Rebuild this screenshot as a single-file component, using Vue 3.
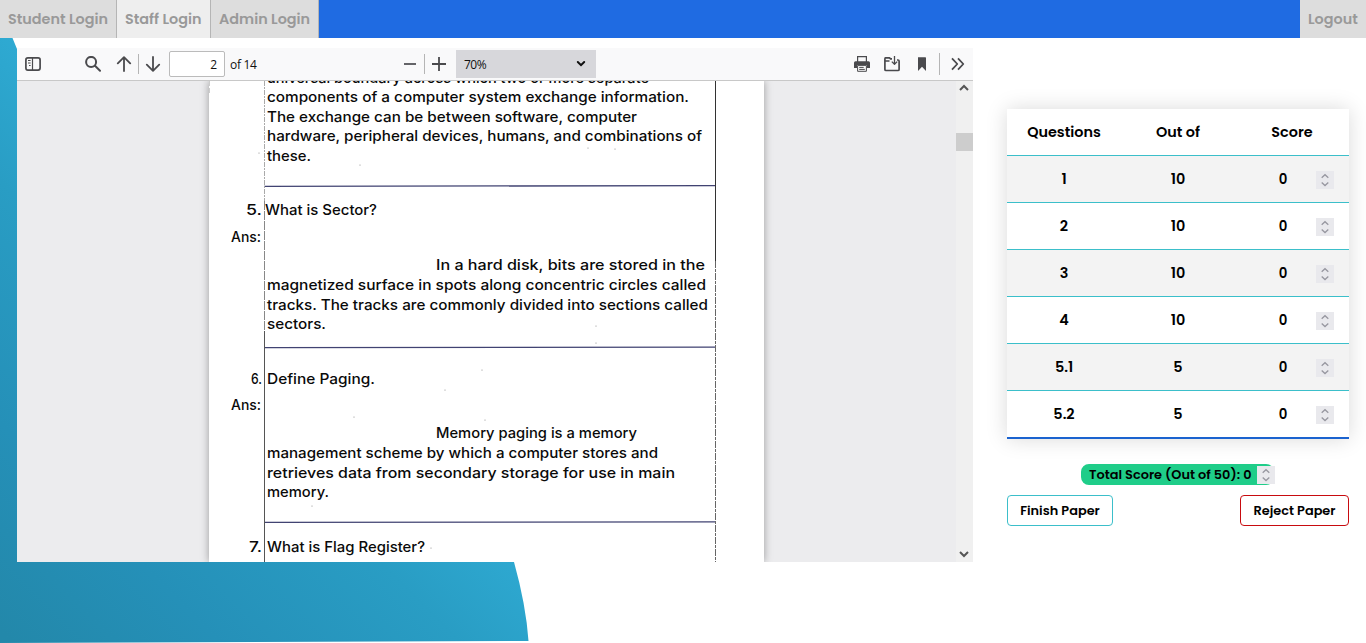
<script setup>
import { ref } from 'vue'

const tabs = ref([
  { label: 'Student Login', cls: 'student' },
  { label: 'Staff Login', cls: 'staff' },
  { label: 'Admin Login', cls: 'admin' },
])

const rows = ref([
  { q: '1', max: 10, score: 0 },
  { q: '2', max: 10, score: 0 },
  { q: '3', max: 10, score: 0 },
  { q: '4', max: 10, score: 0 },
  { q: '5.1', max: 5, score: 0 },
  { q: '5.2', max: 5, score: 0 },
])

// Handwritten lines of the answer sheet: text, start x, baseline, width
const lines = [
  ['universal boundary across which two or more separate', 58, 2, 382],
  ['components of a computer system exchange information.', 58, 21, 422],
  ['The exchange can be between software, computer', 58, 41, 370],
  ['hardware, peripheral devices, humans, and combinations of', 58, 60, 435],
  ['these.', 58, 80, 44],
  ['5.', 37, 134, 16],
  ['What is Sector?', 56, 134, 112],
  ['Ans:', 22, 161, 30],
  ['In a hard disk, bits are stored in the', 227, 189, 269],
  ['magnetized surface in spots along concentric circles called', 58, 209, 439],
  ['tracks. The tracks are commonly divided into sections called', 58, 229, 441],
  ['sectors.', 58, 248, 59],
  ['6.', 42, 303, 11],
  ['Define Paging.', 58, 303, 108],
  ['Ans:', 22, 329, 30],
  ['Memory paging is a memory', 227, 357, 201],
  ['management scheme by which a computer stores and', 58, 377, 391],
  ['retrieves data from secondary storage for use in main', 58, 397, 408],
  ['memory.', 58, 416, 62],
  ['7.', 40, 471, 13],
  ['What is Flag Register?', 58, 471, 158],
]

const specks = [
  [50, 72], [151, 84], [379, 67], [406, 68], [387, 245], [387, 262],
  [273, 289], [236, 309], [145, 336], [276, 339], [103, 425], [222, 467],
]
</script>

<template>
  <div class="app">
    <svg class="blob" width="530" height="605" viewBox="0 38 530 605">
      <defs>
        <linearGradient id="sea" gradientUnits="userSpaceOnUse" x1="30" y1="660" x2="375" y2="315">
          <stop offset="0" stop-color="#2388aa" />
          <stop offset=".3" stop-color="#2590b8" />
          <stop offset=".65" stop-color="#299dc4" />
          <stop offset="1" stop-color="#31b1da" />
        </linearGradient>
      </defs>
      <path d="M0 38H12.5L17 49L30 90L514 562Q526 605 528.5 641L0 643Z" fill="url(#sea)" />
    </svg>

    <header class="nav">
      <a v-for="t in tabs" :key="t.label" class="tab" :class="t.cls"><span>{{ t.label }}</span></a>
      <a class="tab logout"><span>Logout</span></a>
    </header>

    <main class="main">
      <section class="viewer">
        <div class="toolbar">
          <svg class="ic side" width="16" height="16" viewBox="0 0 16 16" fill="none" stroke="#4a4a4d">
            <rect x=".9" y="1.9" width="14.2" height="12.2" rx="2" stroke-width="1.7" />
            <path d="M7.5 2v12" stroke-width="1.2" />
            <path d="M3 4.5h2.6M3 7h2.6M4 9.5h1.6" stroke-width="1" />
          </svg>
          <svg class="ic search" width="16" height="16" viewBox="0 0 16 16" fill="none" stroke="#4a4a4d" stroke-width="2" stroke-linecap="round">
            <circle cx="6.1" cy="5.9" r="5" /><path d="M10 9.8L15 14.8" />
          </svg>
          <svg class="ic up" width="16" height="16" viewBox="0 0 16 16" fill="none" stroke="#4a4a4d" stroke-width="1.8" stroke-linecap="round" stroke-linejoin="round">
            <path d="M8 15V1.4M1.8 7.4L8 1.2l6.2 6.2" />
          </svg>
          <i class="sep s1"></i>
          <svg class="ic down" width="16" height="16" viewBox="0 0 16 16" fill="none" stroke="#4a4a4d" stroke-width="1.8" stroke-linecap="round" stroke-linejoin="round">
            <path d="M8 1v13.6M1.8 8.6L8 14.8l6.2-6.2" />
          </svg>
          <div class="page-no">2</div>
          <span class="of">of 14</span>
          <svg class="ic minus" width="14" height="16" viewBox="0 0 14 16"><path d="M1 8h12" stroke="#4a4a4d" stroke-width="1.7" /></svg>
          <i class="sep s2"></i>
          <svg class="ic plus" width="16" height="16" viewBox="0 0 16 16"><path d="M1 8h14M8 1v14" stroke="#4a4a4d" stroke-width="1.8" /></svg>
          <div class="scale">
            <span>70%</span>
            <svg width="10" height="8" viewBox="0 0 10 8" fill="none" stroke="#111" stroke-width="2" stroke-linecap="round"><path d="M1.8 2L5 5.2L8.2 2" /></svg>
          </div>
          <svg class="ic print" width="16" height="16" viewBox="0 0 16 16">
            <path d="M3.6 6V.7h8.8V6" fill="none" stroke="#4a4a4d" stroke-width="1.2" />
            <path d="M1.5 5.2h13Q16 5.2 16 6.7V12h-3V9H3v3H0V6.7Q0 5.2 1.5 5.2Z" fill="#4a4a4d" />
            <path d="M3.6 9.4h8.8v5.9H3.6ZM5.2 11.4h4.5M5.2 13.4h5.6" fill="none" stroke="#4a4a4d" />
          </svg>
          <svg class="ic save" width="16" height="16" viewBox="0 0 16 16" fill="none" stroke="#4a4a4d" stroke-width="1.7" stroke-linejoin="round">
            <path d="M8 2.9H6.5L5.5 1.9H1.5Q.9 2 .9 3V13.5Q.9 14.5 2 14.5H14Q15.1 14.5 15.1 13.5V5Q15.1 4 14 4H13M1 5H5.5" />
            <path d="M10.5 0V8M7.8 5.6L10.5 8.3L13.2 5.6" stroke-width="1.3" />
          </svg>
          <svg class="ic mark" width="10" height="16" viewBox="0 0 10 16"><path d="M1 1.2H8.4Q9 1.2 9 2V15L5 10.8L1 15Z" fill="#4a4a4d" /></svg>
          <i class="sep s3"></i>
          <svg class="ic more" width="16" height="16" viewBox="0 0 16 16" fill="none" stroke="#4a4a4d" stroke-width="1.8" stroke-linejoin="round"><path d="M2 2.4L7.3 8L2 13.6M8 2.4L13.3 8L8 13.6" /></svg>
        </div>
        <div class="canvas">
          <div class="sheet">
            <svg width="555" height="481" viewBox="0 0 555 481">
              <g class="hand">
                <text v-for="(l, i) in lines" :key="i" :x="l[1]" :y="l[2]" :textLength="l[3]" lengthAdjust="spacingAndGlyphs">{{ l[0] }}</text>
              </g>
              <g stroke="#414372" stroke-width="1.3">
                <path d="M55 105.3L506 104.7M55 266.6L506 266.2M55 441.4L506 440.8" />
              </g>
              <path d="M55.5 0V120" stroke="#aaa" stroke-dasharray="5 1 2 1" />
              <path d="M55.5 120V250" stroke="#888" stroke-dasharray="9 1" />
              <path d="M55.5 250V481" stroke="#555" />
              <path d="M506.5 0V180" stroke="#333" />
              <path d="M506.5 180V481" stroke="#666" stroke-dasharray="7 1 3 1" />
              <path d="M.5 0V14" stroke="#ccc" stroke-dasharray="5 2" />
              <circle v-for="(s, i) in specks" :key="'s' + i" :cx="s[0]" :cy="s[1]" r=".6" fill="#888" />
            </svg>
          </div>
          <div class="scrollbar">
            <svg width="10" height="8" viewBox="0 0 10 8" fill="none" stroke="#555" stroke-width="2"><path d="M1 6L5 2L9 6" /></svg>
            <i class="thumb"></i>
            <svg class="bot" width="10" height="8" viewBox="0 0 10 8" fill="none" stroke="#555" stroke-width="2"><path d="M1 2L5 6L9 2" /></svg>
          </div>
        </div>
      </section>

      <aside class="panel">
        <div class="table">
          <div class="row head">
            <span>Questions</span><span>Out of</span><span>Score</span>
          </div>
          <div v-for="r in rows" :key="r.q" class="row">
            <span>{{ r.q }}</span><span>{{ r.max }}</span>
            <span class="score">
              <b>{{ r.score }}</b>
              <svg class="spin" width="18" height="18" viewBox="0 0 18 18"><rect width="18" height="18" fill="#e9e9ed" /><path d="M5.7 6.7L9 3.7L12.3 6.7M5.7 11.5L9 14.5L12.3 11.5" fill="none" stroke="#9797a0" stroke-width="1.3" /></svg>
            </span>
          </div>
        </div>
        <div class="total">
          <span>Total Score (Out of 50): 0</span>
          <svg class="spin" width="18" height="18" viewBox="0 0 18 18"><rect width="18" height="18" fill="#e9e9ed" /><path d="M5.7 6.7L9 3.7L12.3 6.7M5.7 11.5L9 14.5L12.3 11.5" fill="none" stroke="#9797a0" stroke-width="1.3" /></svg>
        </div>
        <div class="actions">
          <button class="btn finish">Finish Paper</button>
          <button class="btn reject">Reject Paper</button>
        </div>
      </aside>
    </main>
  </div>
</template>

<style>
html, body { margin: 0; background: #fff; overflow: hidden; }
</style>

<style scoped>
* { box-sizing: border-box; }
.app { position: relative; width: 1366px; height: 643px; overflow: hidden; font-family: Poppins, Inter, "Open Sans", sans-serif; color: #000; background: #fff; }
.blob { position: absolute; left: 0; top: 38px; }
.nav { position: relative; display: flex; height: 38px; background: #1f6be2; }
.tab { display: flex; align-items: center; padding-left: 8px; height: 38px; background: #ddd; border-right: 1px solid #b5b5b5; color: #999; font-size: 14.4px; font-weight: 600; white-space: nowrap; }
.student { width: 117px; }
.staff { width: 94px; background: #eee; }
.admin { width: 108px; }
.logout { width: 66px; margin-left: auto; border-right: 0; }
.main { position: relative; display: flex; padding: 10px 17px 0; }
.viewer { width: 956px; height: 514px; background: #ececee; }
.toolbar { display: flex; align-items: center; height: 33px; background: #f9f9fa; border-bottom: 1px solid #c8c8c8; font-family: "Segoe UI", "Open Sans", sans-serif; font-size: 12px; color: #111; }
.ic { flex: none; display: block; }
.side { margin-left: 8px; }
.search { margin-left: 44px; }
.up { margin-left: 15px; }
.sep { flex: none; width: 1px; height: 20px; background: #b5b5b5; }
.s1 { margin-left: 6px; }
.down { margin-left: 6px; }
.page-no { width: 56px; height: 26px; margin-left: 8px; padding-right: 7px; line-height: 25px; text-align: right; background: #fff; border: 1px solid #bbb; border-radius: 2px; }
.of { width: 34px; margin-left: 5px; letter-spacing: -.3px; }
.minus { margin-left: 139px; }
.s2 { margin-left: 7px; }
.plus { margin-left: 6px; }
.scale { display: flex; flex: none; align-items: center; justify-content: space-between; width: 140px; height: 28px; margin-left: 9px; padding: 0 10px 0 8px; background: #d7d7db; letter-spacing: -.5px; }
.print { margin-left: 258px; }
.save { margin-left: 14px; }
.mark { margin-left: 17px; }
.s3 { margin-left: 12px; height: 22px; }
.more { margin-left: 10px; }
.canvas { display: flex; height: 481px; overflow: hidden; }
.sheet { width: 555px; height: 481px; margin-left: 192px; background: #fff; box-shadow: 0 0 8px rgba(0, 0, 0, .35); }
.sheet svg { display: block; }
.hand { font-family: Inter, "Open Sans", sans-serif; font-size: 14.5px; font-weight: 500; fill: #0a0a0a; }
.scrollbar { display: flex; flex-direction: column; align-items: center; width: 17px; margin-left: auto; padding: 3px 1px 4px 0; background: #f0f0f0; }
.thumb { flex: none; width: 17px; height: 18px; margin: 41px -1px 0 0; background: #cdcdcd; }
.bot { margin-top: auto; }
.panel { width: 342px; margin: 61px 0 0 34px; }
.table { height: 330px; border-bottom: 2px solid #1b63cf; background: #fff; box-shadow: 0 0 20px rgba(0, 0, 0, .15); }
.row { display: grid; grid-template-columns: 114px 114px 114px; align-items: center; height: 47px; text-align: center; border-bottom: 1px solid #3bbfca; font-size: 14.4px; font-weight: 600; }
.row:nth-child(2), .row:nth-child(4), .row:nth-child(6) { background: #f3f3f3; }
.row:last-child { height: 46px; border-bottom: 0; }
.score { display: flex; align-items: center; justify-content: flex-end; padding-right: 15px; }
.score b { width: 10px; margin-right: 28px; padding-top: 2px; font-size: 13.33px; font-weight: 600; }
.score .spin { margin-top: 2px; }
.total { display: flex; align-items: center; width: 193px; height: 21px; margin: 25px 0 0 74px; background: #1fcd89; border-radius: 8px; font-size: 12.9px; font-weight: 600; white-space: nowrap; }
.total span { flex: none; width: 168px; margin-left: 8px; }
.total .spin { flex: none; margin-top: 1px; }
.actions { display: flex; justify-content: space-between; margin-top: 10px; }
.btn { height: 31px; padding: 0; background: #fff; border-radius: 4px; font: 600 12.9px Poppins, Inter, sans-serif; color: #000; white-space: nowrap; }
.finish { width: 106px; border: 1px solid #3bbfca; }
.reject { width: 109px; border: 1px solid #c80b0f; }
</style>
